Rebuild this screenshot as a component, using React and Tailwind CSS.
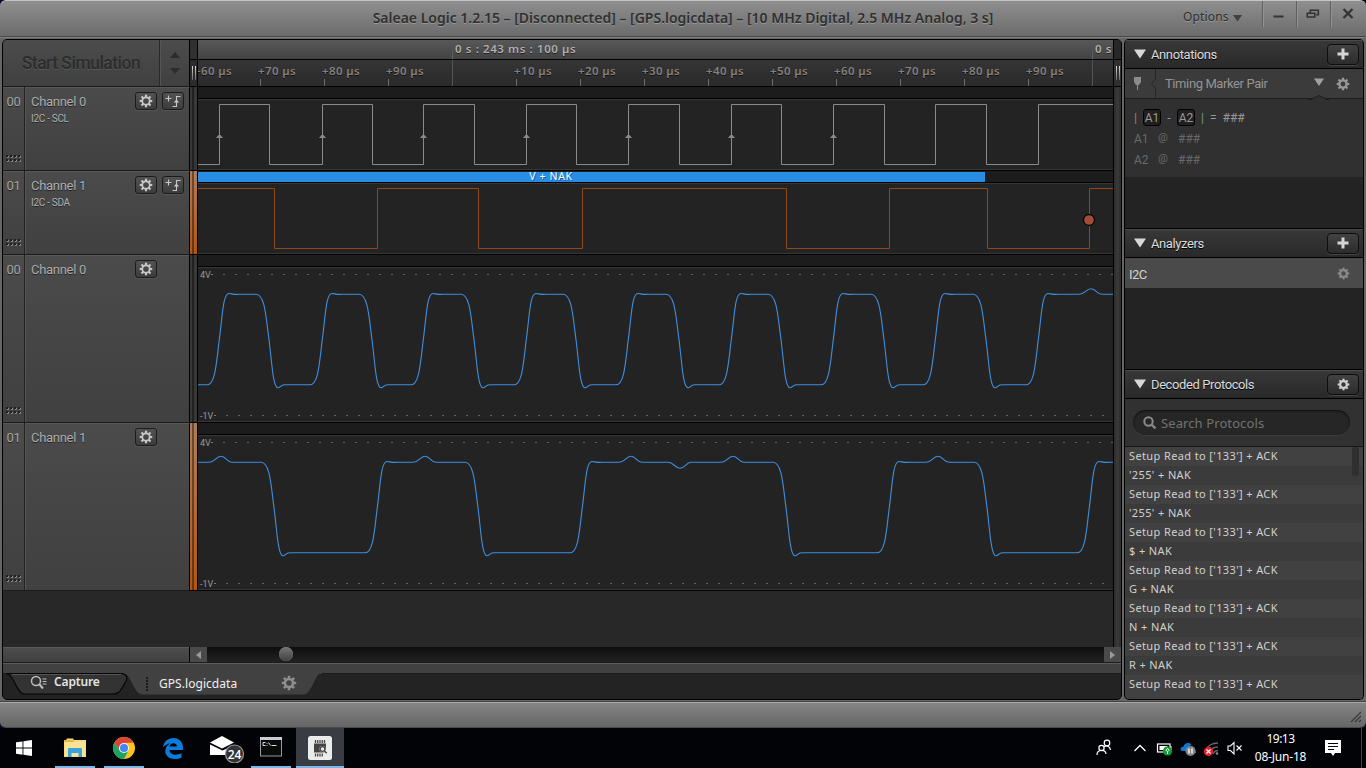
import React from "react";

const TITLE = "font-['Noto_Sans','Open_Sans',sans-serif]";

function Gear({ size = 14, color = "#c8c8c8", ring = 3.6, hole = 2.4 }) {
  return (
    <svg width={size} height={size} viewBox="-7 -7 14 14" className="block shrink-0">
      {[0, 45, 90, 135, 180, 225, 270, 315].map((a) => (
        <rect key={a} x="-1.1" y="-6.3" width="2.2" height="3" fill={color} transform={`rotate(${a})`} />
      ))}
      <circle r={ring} fill="none" stroke={color} strokeWidth={hole} />
    </svg>
  );
}

function Plus() {
  return (
    <svg width="12" height="12" viewBox="0 0 12 12" className="block">
      <path d="M4.500 0.500h3v4h4v3h-4v4h-3v-4h-4v-3h4z" fill="#d6d6d6" />
    </svg>
  );
}

function Grip() {
  return (
    <svg width="16" height="8" viewBox="0 0 16 8" className="block">
      {[0, 4, 8, 12].map((x) =>
        [0, 4].map((y) => (
          <g key={`${x}-${y}`}>
            <rect x={x} y={y} width="2" height="2" fill="#1e1e1e" />
            <path d={`M${x + 1} ${y + 2.5}h1.500v-1.500`} fill="none" stroke="#8a8a8a" strokeWidth="1" />
          </g>
        ))
      )}
    </svg>
  );
}

function SmallButton({ children }) {
  return (
    <div className="flex h-[18px] w-[22px] items-center justify-center rounded-[3px] border border-[#1c1c1c] bg-linear-to-b from-[#525252] to-[#3c3c3c] shadow-[0_1px_0_#555]">
      {children}
    </div>
  );
}

function Channel({ num, name, sub, trigger, className }) {
  return (
    <div className={`flex border-b border-[#1b1b1b] bg-linear-to-b from-[#4b4b4b] to-[#404040] shadow-[inset_0_1px_0_#585858] ${className}`}>
      <div className="flex w-[22px] flex-col items-center justify-between border-r border-[#222] pt-[6px] pb-[7px]">
        <span className="text-[13px] leading-[18px] tracking-[-0.3px] text-[#a6a6a6] [text-shadow:0_1px_0_#222]">{num}</span>
        <Grip />
      </div>
      <div className="flex flex-1 flex-col border-l border-[#555] pt-[5px] pl-[5px]">
        <div className="flex h-[18px] items-center">
          <span className="w-[104px] pt-px text-[13px] leading-[18px] tracking-[-0.3px] text-[#adadad] [text-shadow:0_1px_0_#222]">{name}</span>
          <SmallButton>
            <Gear size={14} ring={3.7} hole={1.7} />
          </SmallButton>
          {trigger && (
            <div className="ml-[5px]">
              <SmallButton>
                <svg width="18" height="14" viewBox="0 0 18 14" className="block">
                  <path d="M4.500 1.500v6M1.500 4.500h6M8.500 12.500h4V2.500h4" fill="none" stroke="#c8c8c8" strokeWidth="1.100" />
                  <path d="M9.800 8.500l2.700-3 2.700 3z" fill="#c8c8c8" />
                </svg>
              </SmallButton>
            </div>
          )}
        </div>
        {sub && <span className="mt-[2px] text-[10px] leading-[14px] tracking-[-0.3px] text-[#b2b2b2] [text-shadow:0_1px_0_#222]">{sub}</span>}
      </div>
    </div>
  );
}

function squarePath(hi, lo, startHigh, edges) {
  let high = startHigh;
  let d = `M0 ${high ? hi : lo}`;
  edges.forEach((x) => {
    high = !high;
    d += `H${x - 198 + 0.5}V${high ? hi : lo}`;
  });
  return d + "H916";
}

function analogPath(hi, lo, startHigh, edges, bumps) {
  const mid = (hi + lo) / 2;
  const events = [...edges.map((x) => ({ x, t: "e" })), ...bumps.map((b) => ({ x: b[0], t: "b", h: b[1] }))].sort((a, b) => a.x - b.x);
  let high = startHigh;
  let d = `M0 ${high ? hi : lo}`;
  events.forEach((e) => {
    const m = e.x - 198;
    if (e.t === "b") {
      const p = hi - e.h;
      d += `L${m - 12} ${hi}C${m - 6} ${hi} ${m - 5} ${p} ${m} ${p}C${m + 5} ${p} ${m + 6} ${hi} ${m + 11} ${hi}`;
    } else if (high) {
      d += `L${m - 13} ${hi}C${m - 4} ${hi} ${m - 3} ${mid - 22} ${m} ${mid}C${m + 3} ${mid + 24} ${m + 4} ${lo + 2.8} ${m + 9} ${lo + 3}C${m + 11.5} ${lo + 3} ${m + 11.5} ${lo - 0.3} ${m + 16} ${lo}`;
      high = false;
    } else {
      d += `L${m - 12} ${lo}C${m - 3.5} ${lo} ${m - 2.5} ${mid + 22} ${m + 0.3} ${mid}C${m + 3.5} ${mid - 24} ${m + 4} ${hi - 0.8} ${m + 10} ${hi - 0.8}C${m + 13} ${hi - 0.8} ${m + 14} ${hi + 0.6} ${m + 20} ${hi}`;
      high = true;
    }
  });
  return d + `L916 ${hi}`;
}

const CLK = [219, 269, 322, 372, 423, 474, 526, 576, 628, 679, 731, 781, 833, 884, 935, 986, 1038];
const DATA = [274, 377, 478, 582, 786, 889, 987, 1089];

function Digital({ children, strip }) {
  return (
    <div className="flex h-[84px] flex-col border-b border-black">
      <div className="flex h-[12px] border-b border-black bg-[#1c1c1c]">{strip}</div>
      <div className="h-[71px] border-t border-b border-[#363636] bg-[#232323]">
        <svg width="915" height="69" className="block">{children}</svg>
      </div>
    </div>
  );
}

function Analog({ d }) {
  return (
    <div className="flex h-[168px] flex-col border-b border-black">
      <div className="h-[12px] border-b border-black bg-[#1c1c1c]" />
      <div className="h-[155px] border-t border-b border-[#363636] bg-[#232323]">
        <svg width="915" height="153" className="block font-['Roboto',sans-serif]">
          <path d="M25 6.500H915" stroke="#626262" strokeWidth="1" strokeDasharray="2 10" />
          <path d="M28 147.500H908" stroke="#626262" strokeWidth="1" strokeDasharray="2 10" />
          <path d="M13 6.500h2M16 147.500h2" stroke="#777" />
          <text x="2" y="10" fontSize="9" fill="#999">4V</text>
          <text x="2" y="151" fontSize="9" fill="#999">-1V</text>
          <path d={d} fill="none" stroke="#3f8fdf" strokeWidth="1.100" />
        </svg>
      </div>
    </div>
  );
}

function PanelHeader({ title, children }) {
  return (
    <div className="flex h-[30px] shrink-0 items-center border-t border-b border-black bg-linear-to-b from-[#383838] to-[#292929] pr-[4px] pl-[9px] shadow-[inset_0_1px_0_#4a4a4a]">
      <svg width="12" height="10" viewBox="0 0 12 10" className="mb-px block">
        <path d="M0 0.500h12L6 9.500z" fill="#d8d8d8" />
      </svg>
      <span className="flex-1 pt-[2px] pl-[5px] text-[13px] leading-[18px] tracking-[-0.4px] text-[#dcdcdc] [text-shadow:0_1px_0_#000]">{title}</span>
      <div className="flex h-[21px] w-[32px] items-center justify-center rounded-[4px] border border-[#0e0e0e] bg-linear-to-b from-[#424242] to-[#2c2c2c] shadow-[0_1px_0_#444]">
        {children}
      </div>
    </div>
  );
}

function Ruler() {
  const labels = ["+60", "+70", "+80", "+90", "", "+10", "+20", "+30", "+40", "+50", "+60", "+70", "+80", "+90", ""];
  return (
    <div className={`flex h-[27px] overflow-hidden border-b border-black bg-linear-to-b from-[#353535] to-[#2a2a2a] ${TITLE}`}>
      {labels.map((l, i) => (
        <div key={i} className={`flex w-16 shrink-0 flex-col justify-between ${i === 0 ? "-ml-[4px]" : ""}`}>
          <span className="-ml-px h-[18px] pt-[2px] pl-px text-[11.500px] leading-[18px] font-semibold tracking-[0.4px] whitespace-nowrap text-[#828282] [text-shadow:0_1px_0_#111]">
            {l ? `${l} µs` : ""}
          </span>
          {l && <div className="ml-[2px] h-[7px] w-px shrink-0 bg-[#6a6a6a]" />}
          {!l && <div className="-mt-[18px] ml-[2px] h-[26px] w-px shrink-0 bg-[#555]" />}
        </div>
      ))}
    </div>
  );
}

function Gutter({ h, orange }) {
  return (
    <div className={`flex w-[7px] border-b border-black ${h} ${orange ? "bg-linear-to-b from-[#b07c54] to-[#b0560f]" : "bg-[#383838]"}`}>
      <div className="ml-[2px] w-[2px] bg-black/40" />
    </div>
  );
}

function Handle() {
  return (
    <div className="flex gap-[2px]">
      <div className="h-[14px] w-px bg-linear-to-b from-[#ddd] to-[#666]" />
      <div className="h-[14px] w-px bg-linear-to-b from-[#ddd] to-[#666]" />
    </div>
  );
}

const PROTO = ["'255' + NAK", "'255' + NAK", "$ + NAK", "G + NAK", "N + NAK", "R + NAK"];
const ROWS = PROTO.flatMap((p) => ["Setup Read to ['133'] + ACK", p]).concat(["Setup Read to ['133'] + ACK"]);

function TitleBar() {
  return (
    <div className={`flex h-[38px] shrink-0 rounded-t-[6px] border-t border-[#c4c4c4] bg-linear-to-b from-[#8f8f8f] to-[#6a6a6a] shadow-[inset_0_-1px_0_#7e7e7e,inset_0_-2px_0_#4a4a4a] ${TITLE}`}>
      <div className="w-[183px]" />
      <div className="flex flex-1 justify-center pt-[7px]">
        <span className="text-[14px] leading-[20px] font-semibold tracking-[-0.01px] whitespace-nowrap text-[#303030] [text-shadow:0_1px_0_#999]">
          Saleae Logic 1.2.15 – [Disconnected] – [GPS.logicdata] – [10 MHz Digital, 2.5 MHz Analog, 3 s]
        </span>
      </div>
      <div className="flex w-[183px]">
        <span className="pt-[7px] text-[12px] leading-[18px] tracking-[0.15px] text-[#2e2e2e] [text-shadow:0_1px_0_#999]">Options</span>
        <svg width="9" height="7" viewBox="0 0 9 7" className="mt-[14px] ml-[4px] block"><path d="M0 0h9L4.500 6.500z" fill="#404040" /></svg>
        <div className="ml-auto flex h-[26px] w-[104px]">
          {[0, 1, 2].map((i) => (
            <div key={i} className="flex h-[26px] w-[34px] border-l border-[#606060] shadow-[inset_1px_0_0_#949494]">
              <svg width="33" height="26" viewBox="0 0 33 26" fill="none" stroke="#333" strokeWidth="1.600">
                {i === 0 && <path d="M10.500 15.500h10" strokeWidth="2" />}
                {i === 1 && <path d="M13.300 12V9.300h8v4.400h-2M10.300 12.300h7.500v3.700h-7.500z" />}
                {i === 2 && <path d="M12.500 8l9 9M21.500 8l-9 9" strokeWidth="2.300" />}
              </svg>
            </div>
          ))}
        </div>
      </div>
    </div>
  );
}

function Tabs() {
  return (
    <div className="relative h-[26px] bg-[#232323]">
      <svg width="1119" height="26" className="block">
        <path d="M0 0H1119" stroke="#161616" strokeWidth="1" />
        <path d="M118 -1C124 0 126 4 130 12C134 19 135 21.500 141 21.500H298C304 21.500 305 20 309 13C313 6 314 0 320 -1z" fill="#414141" />
        <path d="M120 -0.500H319" stroke="#414141" strokeWidth="3" />
        <path d="M4 0.500H118C123 0.500 125 4 123 8L119 15C116 20 114 21 110 21H22C18 21 17 19 14 14L9 5C7 2 6 0.500 3 0.500" fill="#333" stroke="#050505" strokeWidth="1.200" />
        <path d="M9 1.500H118" stroke="#555" />
        <g fill="none" stroke="#bdbdbd" strokeWidth="1.500">
          <circle cx="33" cy="8" r="4.500" />
          <path d="M36.500 11.500l3.500 4" strokeWidth="2" />
          <path d="M39.500 6h4M39.500 8.500h4M39.500 11h4" strokeWidth="1" />
        </g>
        <g fill="#161616">
          {[4, 7, 10, 13, 16].map((y) => <rect key={y} x="143" y={y} width="2" height="1.800" />)}
        </g>
      </svg>
      <div className={`absolute inset-x-0 top-0 flex ${TITLE}`}>
        <span className="w-[105px] pl-[51px] text-[12px] leading-[18px] font-semibold tracking-[-0.15px] text-[#e4e4e4]">Capture</span>
        <span className="w-[123px] pt-px pl-[51px] text-[12px] leading-[20px] tracking-[0.05px] whitespace-nowrap text-[#f0f0f0]">GPS.logicdata</span>
        <div className="pt-[2px] pl-[50px]"><Gear size={16} color="#8e8e8e" ring={3.5} hole={2.2} /></div>
      </div>
    </div>
  );
}

function MainPanel() {
  return (
    <div className="flex h-[661px] w-[1120px] flex-col overflow-hidden rounded-[5px] border border-black bg-[#282828]">
      <div className="flex h-[607px]">
        <div className="flex h-[551px] w-[187px] shrink-0 flex-col border-r border-black">
          <div className="flex h-[47px] border-b border-[#1b1b1b] bg-linear-to-b from-[#4c4c4c] to-[#404040]">
            <div className="flex w-[157px] items-center justify-center border-r border-[#2a2a2a]">
              <span className="text-[17.500px] leading-[22px] font-medium tracking-[-0.5px] whitespace-nowrap text-[#2c2c2c] [text-shadow:0_1px_0_#585858]">Start Simulation</span>
            </div>
            <div className="flex flex-1 items-center justify-center border-l border-[#555]">
              <svg width="10" height="22" viewBox="0 0 10 22"><path d="M0 6h10L5 0zM0 16h10l-5 6z" fill="#2c2c2c" /></svg>
            </div>
          </div>
          <Channel num="00" name="Channel 0" sub="I2C - SCL" trigger className="h-[84px]" />
          <Channel num="01" name="Channel 1" sub="I2C - SDA" trigger className="h-[84px]" />
          <Channel num="00" name="Channel 0" className="h-[168px]" />
          <Channel num="01" name="Channel 1" className="h-[168px]" />
        </div>
        <div className="flex h-[551px] w-[8px] shrink-0 flex-col border-r border-black bg-[#282828]">
          <div className="h-[20px] w-[7px] border-b border-black bg-[#303030]" />
          <div className="flex h-[27px] items-center justify-center border-b border-black bg-[#2c2c2c]"><Handle /></div>
          <Gutter h="h-[84px]" />
          <Gutter h="h-[84px]" orange />
          <Gutter h="h-[168px]" />
          <Gutter h="h-[168px]" orange />
        </div>
        <div className="flex w-[915px] shrink-0 flex-col overflow-hidden">
          <div className={`flex h-[20px] overflow-hidden border-b border-black bg-linear-to-b from-[#585858] to-[#434343] pl-[254px] text-[11.500px] leading-[17px] font-semibold tracking-[0.6px] whitespace-nowrap text-[#b0b0b0] [text-shadow:0_1px_0_#222] ${TITLE}`}>
            <div className="mt-[6px] mr-[2px] w-px shrink-0 bg-linear-to-b from-transparent to-[#6a6a6a]" />
            <span className="w-[637px] shrink-0">0 s : 243 ms : 100 µs</span>
            <div className="mt-[6px] mr-[2px] w-px shrink-0 bg-linear-to-b from-transparent to-[#6a6a6a]" />
            <span>0 s</span>
          </div>
          <Ruler />
          <Digital>
            <path d={squarePath(4.5, 64.5, false, CLK)} fill="none" stroke="#8a8a8a" />
            {[219, 322, 423, 526, 628, 731, 833].map((x) => (
              <path key={x} d={`M${x - 201} 38h7l-2.500-3h-2z`} fill="#8a8a8a" />
            ))}
          </Digital>
          <Digital
            strip={
              <div className={`mt-px flex h-[10px] w-[787px] items-center justify-center bg-[#2a8de4] pr-[81px] text-[10.500px] leading-[10px] text-white [text-shadow:1px_1px_0_#1a5a9a] ${TITLE}`}>
                <span className="-mt-[2px] tracking-[0.65px]">V + NAK</span>
              </div>
            }
          >
            <path d={squarePath(4.5, 64.5, true, DATA)} fill="none" stroke="#8c4a1a" />
            <circle cx="891" cy="36" r="5.500" fill="#a34b38" stroke="#080808" strokeWidth="1.300" />
          </Digital>
          <Analog d={analogPath(26.3, 116.8, false, CLK, [[1091, 5.5]])} />
          <Analog d={analogPath(26.3, 116.8, true, DATA, [[221, 6], [425, 6], [631, 6], [680, -6], [733, 6], [938, 6]])} />
        </div>
        <div className="flex w-[8px] shrink-0 flex-col border-l border-black bg-[#303030]">
          <div className="h-[20px] border-b border-black bg-[#282828]" />
          <div className="flex h-[27px] items-center justify-center border-b border-black"><Handle /></div>
          <div className="mx-auto w-[3px] flex-1 bg-[#383838]" />
        </div>
      </div>
      <div className="flex h-[15px] shrink-0 bg-black">
        <div className="w-[186px] border-t border-[#5a5a5a] bg-linear-to-b from-[#4c4c4c] to-[#404040]" />
        <div className="ml-px flex w-[17px] items-center justify-center bg-[#4a4a4a]">
          <svg width="5" height="8" viewBox="0 0 5 8"><path d="M5 0v8L0 4z" fill="#9a9a9a" /></svg>
        </div>
        <div className="flex flex-1 items-start bg-linear-to-b from-[#0e0e0e] to-[#222] pl-[72px]">
          <div className="size-[14px] rounded-full bg-linear-to-b from-[#777] to-[#404040] shadow-[inset_0_0_1px_#999]" />
        </div>
        <div className="flex w-[17px] items-center justify-center bg-[#4a4a4a]">
          <svg width="5" height="8" viewBox="0 0 5 8"><path d="M0 0v8l5-4z" fill="#9a9a9a" /></svg>
        </div>
      </div>
      <div className="h-[11px] shrink-0 border-t border-[#1c1c1c] bg-[#414141] shadow-[inset_0_1px_0_#5c5c5c]" />
      <Tabs />
    </div>
  );
}

function SidePanel() {
  return (
    <div className="flex h-[661px] w-[240px] flex-col overflow-hidden rounded-[5px] border-r border-b border-l border-black bg-[#232323]">
      <PanelHeader title="Annotations"><Plus /></PanelHeader>
      <div className="flex h-[30px] shrink-0 items-center border-b border-[#1c1c1c] bg-[#3b3b3b]">
        <svg width="40" height="29" viewBox="0 0 40 29" className="block">
          <path d="M9 8h7v5l-2 3h-1v5h-1v-5h-1l-2-3z" fill="#8c8c8c" />
          <path d="M30.500 0v10l-4 4.500 4 4.500v10" fill="none" stroke="#252525" />
        </svg>
        <span className="w-[152px] text-[13px] leading-[18px] tracking-[-0.4px] whitespace-nowrap text-[#949494]">Timing Marker Pair</span>
        <svg width="12" height="9" viewBox="0 0 12 9" className="-mt-[3px] -ml-[4px] block"><path d="M1 0.500h10l-5 7.500z" fill="#a0a0a0" /></svg>
        <div className="ml-[11px]"><Gear size={14} color="#979797" /></div>
      </div>
      <div className="flex h-[78px] shrink-0 flex-col bg-[#303030] pl-[9px] font-['Roboto',sans-serif] text-[12px] text-[#686868]">
        <svg width="20" height="5" viewBox="0 0 20 5" className="-mt-[4px] ml-[175px] block shrink-0"><path d="M0 4.500h2L10 0.500l8 4h2" fill="#303030" stroke="#1c1c1c" /></svg>
        <div className="mt-[7px] flex h-[21px] items-center text-[#989898]">
          <span className="w-[9px] text-[#b07a66]">|</span>
          <span className="flex h-[17px] w-[18px] items-center justify-center rounded-[3px] border border-black bg-[#202020]">A1</span>
          <span className="w-[16px] text-center">-</span>
          <span className="flex h-[17px] w-[18px] items-center justify-center rounded-[3px] border border-black bg-[#202020]">A2</span>
          <span className="pl-[6px] text-[#7a9a6a]">|</span>
          <span className="pl-[6px]">=</span>
          <span className="pl-[6px]">###</span>
        </div>
        {["A1", "A2"].map((a) => (
          <div key={a} className="flex h-[21px] items-center">
            <span className="w-[24px]">{a}</span>
            <span className="w-[20px] text-[11px]">@</span>
            <span>###</span>
          </div>
        ))}
      </div>
      <div className="h-[51px] shrink-0" />
      <PanelHeader title="Analyzers"><Plus /></PanelHeader>
      <div className="flex h-[30px] shrink-0 items-center justify-between bg-[#4a4a4a] pr-[13px] pl-[4px]">
        <span className="pt-[3px] text-[13px] tracking-[-0.6px] text-[#d4d4d4]">I2C</span>
        <div className="pt-px"><Gear size={13} color="#8a8a8a" /></div>
      </div>
      <div className="h-[81px] shrink-0" />
      <PanelHeader title="Decoded Protocols"><Gear size={13} color="#d0d0d0" /></PanelHeader>
      <div className="h-[48px] shrink-0 border-b border-[#161616] bg-[#313131] pt-[11px] pr-[13px] pl-[8px]">
        <div className="flex h-[25px] items-center rounded-full bg-[#262626] pl-[10px] shadow-[inset_0_1px_2px_#0e0e0e,0_1px_0_#3d3d3d]">
          <svg width="14" height="14" viewBox="0 0 14 14" fill="none" stroke="#8a8a8a"><circle cx="5.500" cy="5.500" r="4.200" strokeWidth="2" /><path d="M8.500 8.500l4 4" strokeWidth="2.400" /></svg>
          <span className={`pl-[4px] text-[13px] leading-[18px] tracking-[0.1px] text-[#727272] ${TITLE}`}>Search Protocols</span>
        </div>
      </div>
      <div className={`relative flex-1 bg-[#414141] text-[11px] leading-[17px] text-[#d0d0d0] ${TITLE}`}>
        {ROWS.map((r, i) => (
          <div key={i} className={`h-[19px] pl-[4px] tracking-[0.38px] ${i % 2 ? "bg-[#3b3b3b]" : "bg-[#414141]"}`}>{r}</div>
        ))}
        <div className="absolute top-0 right-[4px] h-[29px] w-[7px] rounded-[3px] bg-[#2f2f2f]" />
      </div>
    </div>
  );
}

function Taskbar() {
  const slot = "flex h-[40px] items-center justify-center";
  return (
    <div className="flex h-[40px] bg-[#010307] text-white">
      <div className={`${slot} w-[48px]`}>
        <svg width="16" height="16" viewBox="0 0 16 16" fill="#fff"><path d="M0 2.300L6.500 1.400v6.200H0zM7.400 1.300L16 0v7.600H7.400zM0 8.500h6.500v6.200L0 13.800zM7.400 8.500H16V16l-8.600-1.200z" /></svg>
      </div>
      <div className={`${slot} ml-[7px] w-[40px] border-b-2 border-[#76b9ed]`}>
        <svg width="22" height="20" viewBox="0 0 22 20" className="mt-[2px]"><path d="M0 2h2l1-1.500h6L10 2h12v17H0z" fill="#f9dc80" /><path d="M0 2h10v2H0z" fill="#efb73a" /><path d="M1 4h20v14H1z" fill="#fbe396" /><path d="M4 19v-7.500c0-1 .5-1.500 1.500-1.500h11c1 0 1.500.5 1.500 1.500V19h-3.500v-4h-7v4z" fill="#35a5dc" /></svg>
      </div>
      <div className={`${slot} ml-[9px] w-[40px] border-b-2 border-[#76b9ed]`}>
        <svg width="22" height="22" viewBox="-11 -11 22 22" className="mt-[2px]"><circle r="11" fill="#fbc618" /><path d="M-9.530 -5.500A11 11 0 0 1 9.530 -5.500L0 -5L-4.300 2.500z" fill="#db4437" /><path d="M-9.530 -5.500A11 11 0 0 0 0 11L4.500 2.500L-4.300 2.500z" fill="#1da462" /><circle r="5.100" fill="#f4f4f4" /><circle r="4" fill="#4285f4" /></svg>
      </div>
      <div className={`${slot} ml-[9px] w-[40px]`}>
        <svg width="20" height="21" viewBox="0 0 20 21"><path d="M0 9.500C.6 3.500 5 0 10.500 0 16.500 0 20 4.500 20 9.500V12H6.500c.2 3.200 2.900 4.700 6 4.700 2.300 0 4.300-.6 6-1.600v4.300c-2 1-4.300 1.600-6.900 1.600C6 21 2.300 17.700 2.300 13c0-3.300 1.800-5.900 4.800-7.500C4.500 5.700 1.800 7 0 9.500zM6.600 8.500h7.300c0-2-1.300-3.300-3.500-3.300S6.900 6.600 6.600 8.500z" fill="#0b7bdc" /></svg>
      </div>
      <div className="ml-[17px] flex w-[40px] items-center pt-[2px]">
        <svg width="36" height="28" viewBox="0 0 36 28"><path d="M0 7.500L12 1l12 6.500V20H0z" fill="#fff" /><path d="M0 7.500L12 13.500L24 7.500v3L12.500 15.500L0 9.500z" fill="#010307" /><circle cx="24.500" cy="19" r="9" fill="#333" stroke="#999" strokeWidth="1.200" /><text x="24.500" y="23.500" textAnchor="middle" fontSize="12" fontWeight="600" fontFamily="Open Sans" fill="#fff">24</text></svg>
      </div>
      <div className={`${slot} ml-[1px] w-[40px] border-b-2 border-[#76b9ed]`}>
        <svg width="22" height="20" viewBox="0 0 22 20"><rect x="0.500" y="0.500" width="21" height="18.500" fill="#0a0a0a" stroke="#999" /><rect x="0" y="0" width="22" height="3" fill="#c8ccd0" /><path d="M5.500 5.500H3v3h2.500M7 6v.8M7 8v.8M8.500 5.500l2 3M11.500 8.500h5" stroke="#ddd" strokeWidth="1" fill="none" /></svg>
      </div>
      <div className={`${slot} ml-[5px] w-[48px] border-b-2 border-[#76b9ed] bg-[#393c42]`}>
        <svg width="24" height="24" viewBox="0 0 24 24" className="mt-[2px]"><rect width="24" height="24" rx="2.500" fill="#ececec" /><path d="M7.500 4v3M9.750 4v3M12 4v3M14.250 4v3M16.500 4v3M7.500 17.500v3M9.750 17.500v3M12 17.500v3M14.250 17.500v3" stroke="#444" strokeWidth="1.300" /><path d="M6 7.500h12v9H6z" fill="#444" /><circle cx="14.500" cy="13" r="3" fill="#ececec" /><circle cx="14.500" cy="13" r="2.300" fill="#ececec" stroke="#444" strokeWidth="1.200" /><path d="M16.500 15l3 3" stroke="#ececec" strokeWidth="3" /><path d="M16.200 14.700l2.500 2.500" stroke="#444" strokeWidth="1.500" /></svg>
      </div>
      <div className={`ml-auto flex items-center ${TITLE}`}>
        <svg width="140" height="40" viewBox="1096 728 140 40" className="block" fill="none" stroke="#fff">
          <g strokeWidth="1.200"><circle cx="1107" cy="743" r="2.800" /><circle cx="1101.500" cy="748" r="2.600" /><path d="M1097 755c0-6 8.500-6 9-1M1103.500 747c3-2 6.500-1 7 3" /></g>
          <path d="M1134.500 751l5.500-5.500 5.500 5.500" strokeWidth="1.300" />
          <rect x="1157.500" y="744" width="12.500" height="8" strokeWidth="1.200" /><path d="M1159.500 746h8v4h-8z" fill="#fff" stroke="none" /><path d="M1171 746v4" />
          <circle cx="1167.500" cy="751" r="4.600" fill="#0f9d2f" stroke="none" /><path d="M1167.500 748.300l1.500 2-1.500 1.500-1.500-1.500zM1167.500 751v3" strokeWidth="1" />
          <path d="M1182 751c-2.500-1-1.500-4.500 1.500-4.500 1-4 6.500-4.500 8-1.500l-3 1.500-3 4.500z" fill="#0a78d6" stroke="none" /><path d="M1187 753c-1-2 .5-4 2.500-4.500 1-3 5-2.500 5.500 1l1 3.500z" fill="#2a90e8" stroke="none" />
          <circle cx="1190.500" cy="751" r="5" fill="#858585" stroke="none" /><path d="M1189 748.500v5M1192 748.500v5" strokeWidth="1.300" />
          <g stroke="#666" strokeWidth="1.300"><path d="M1206 750c1-4 6-7 12-7M1209 753c1-3 4-6 9-6M1213 754c1-2 3-3.500 5-3.500" /></g><circle cx="1217" cy="753.500" r="1.300" fill="#888" stroke="none" />
          <circle cx="1208.500" cy="751.500" r="4.700" fill="#e02030" stroke="none" /><path d="M1206.500 749.500l4 4M1210.500 749.500l-4 4" strokeWidth="1.300" />
          <path d="M1228 746h2.500l3.500-3.500v11.500l-3.500-3.500H1228z" strokeWidth="1.100" />
        </svg>
        <svg width="6" height="6" viewBox="0 0 6 6" className="block"><path d="M.5.500l5 5M5.500.500l-5 5" stroke="#fff" strokeWidth="1.100" /></svg>
        <div className="flex w-[77px] flex-col items-center text-[12px] leading-[18px] tracking-[-0.2px]">
          <span className="tracking-[-0.5px]">19:13</span>
          <span>08-Jun-18</span>
        </div>
        <svg width="16" height="16" viewBox="0 0 16 16" className="ml-[6px] block"><path d="M0 0h16v13h-6l-2 3-2-3H0z" fill="#fff" /><path d="M3 3.500h10M3 6.500h10M3 9.500h6" stroke="#010307" /></svg>
        <div className="ml-[20px] h-[40px] w-[5px] border-l border-[#444]" />
      </div>
    </div>
  );
}

export default function App() {
  return (
    <div className="flex h-[768px] w-[1366px] flex-col overflow-hidden bg-[#050b1c] font-['Roboto',sans-serif]">
      <TitleBar />
      <div className="flex h-[664px] shrink-0 gap-[2px] bg-[#666] pt-px pl-[2px]">
        <MainPanel />
        <SidePanel />
      </div>
      <div className="flex h-[26px] shrink-0 items-end justify-end rounded-b-[6px] border-t border-b border-t-[#a8a8a8] border-b-[#4a4a4a] bg-linear-to-b from-[#858585] to-[#666] pr-[4px] pb-[4px] shadow-[0_-1px_0_#444]">
        <svg width="12" height="12" viewBox="0 0 12 12" stroke="#3a3a3a" strokeWidth="1.200"><path d="M1 11L11 1M5 11l6-6M9 11l2-2" /></svg>
      </div>
      <Taskbar />
    </div>
  );
}
